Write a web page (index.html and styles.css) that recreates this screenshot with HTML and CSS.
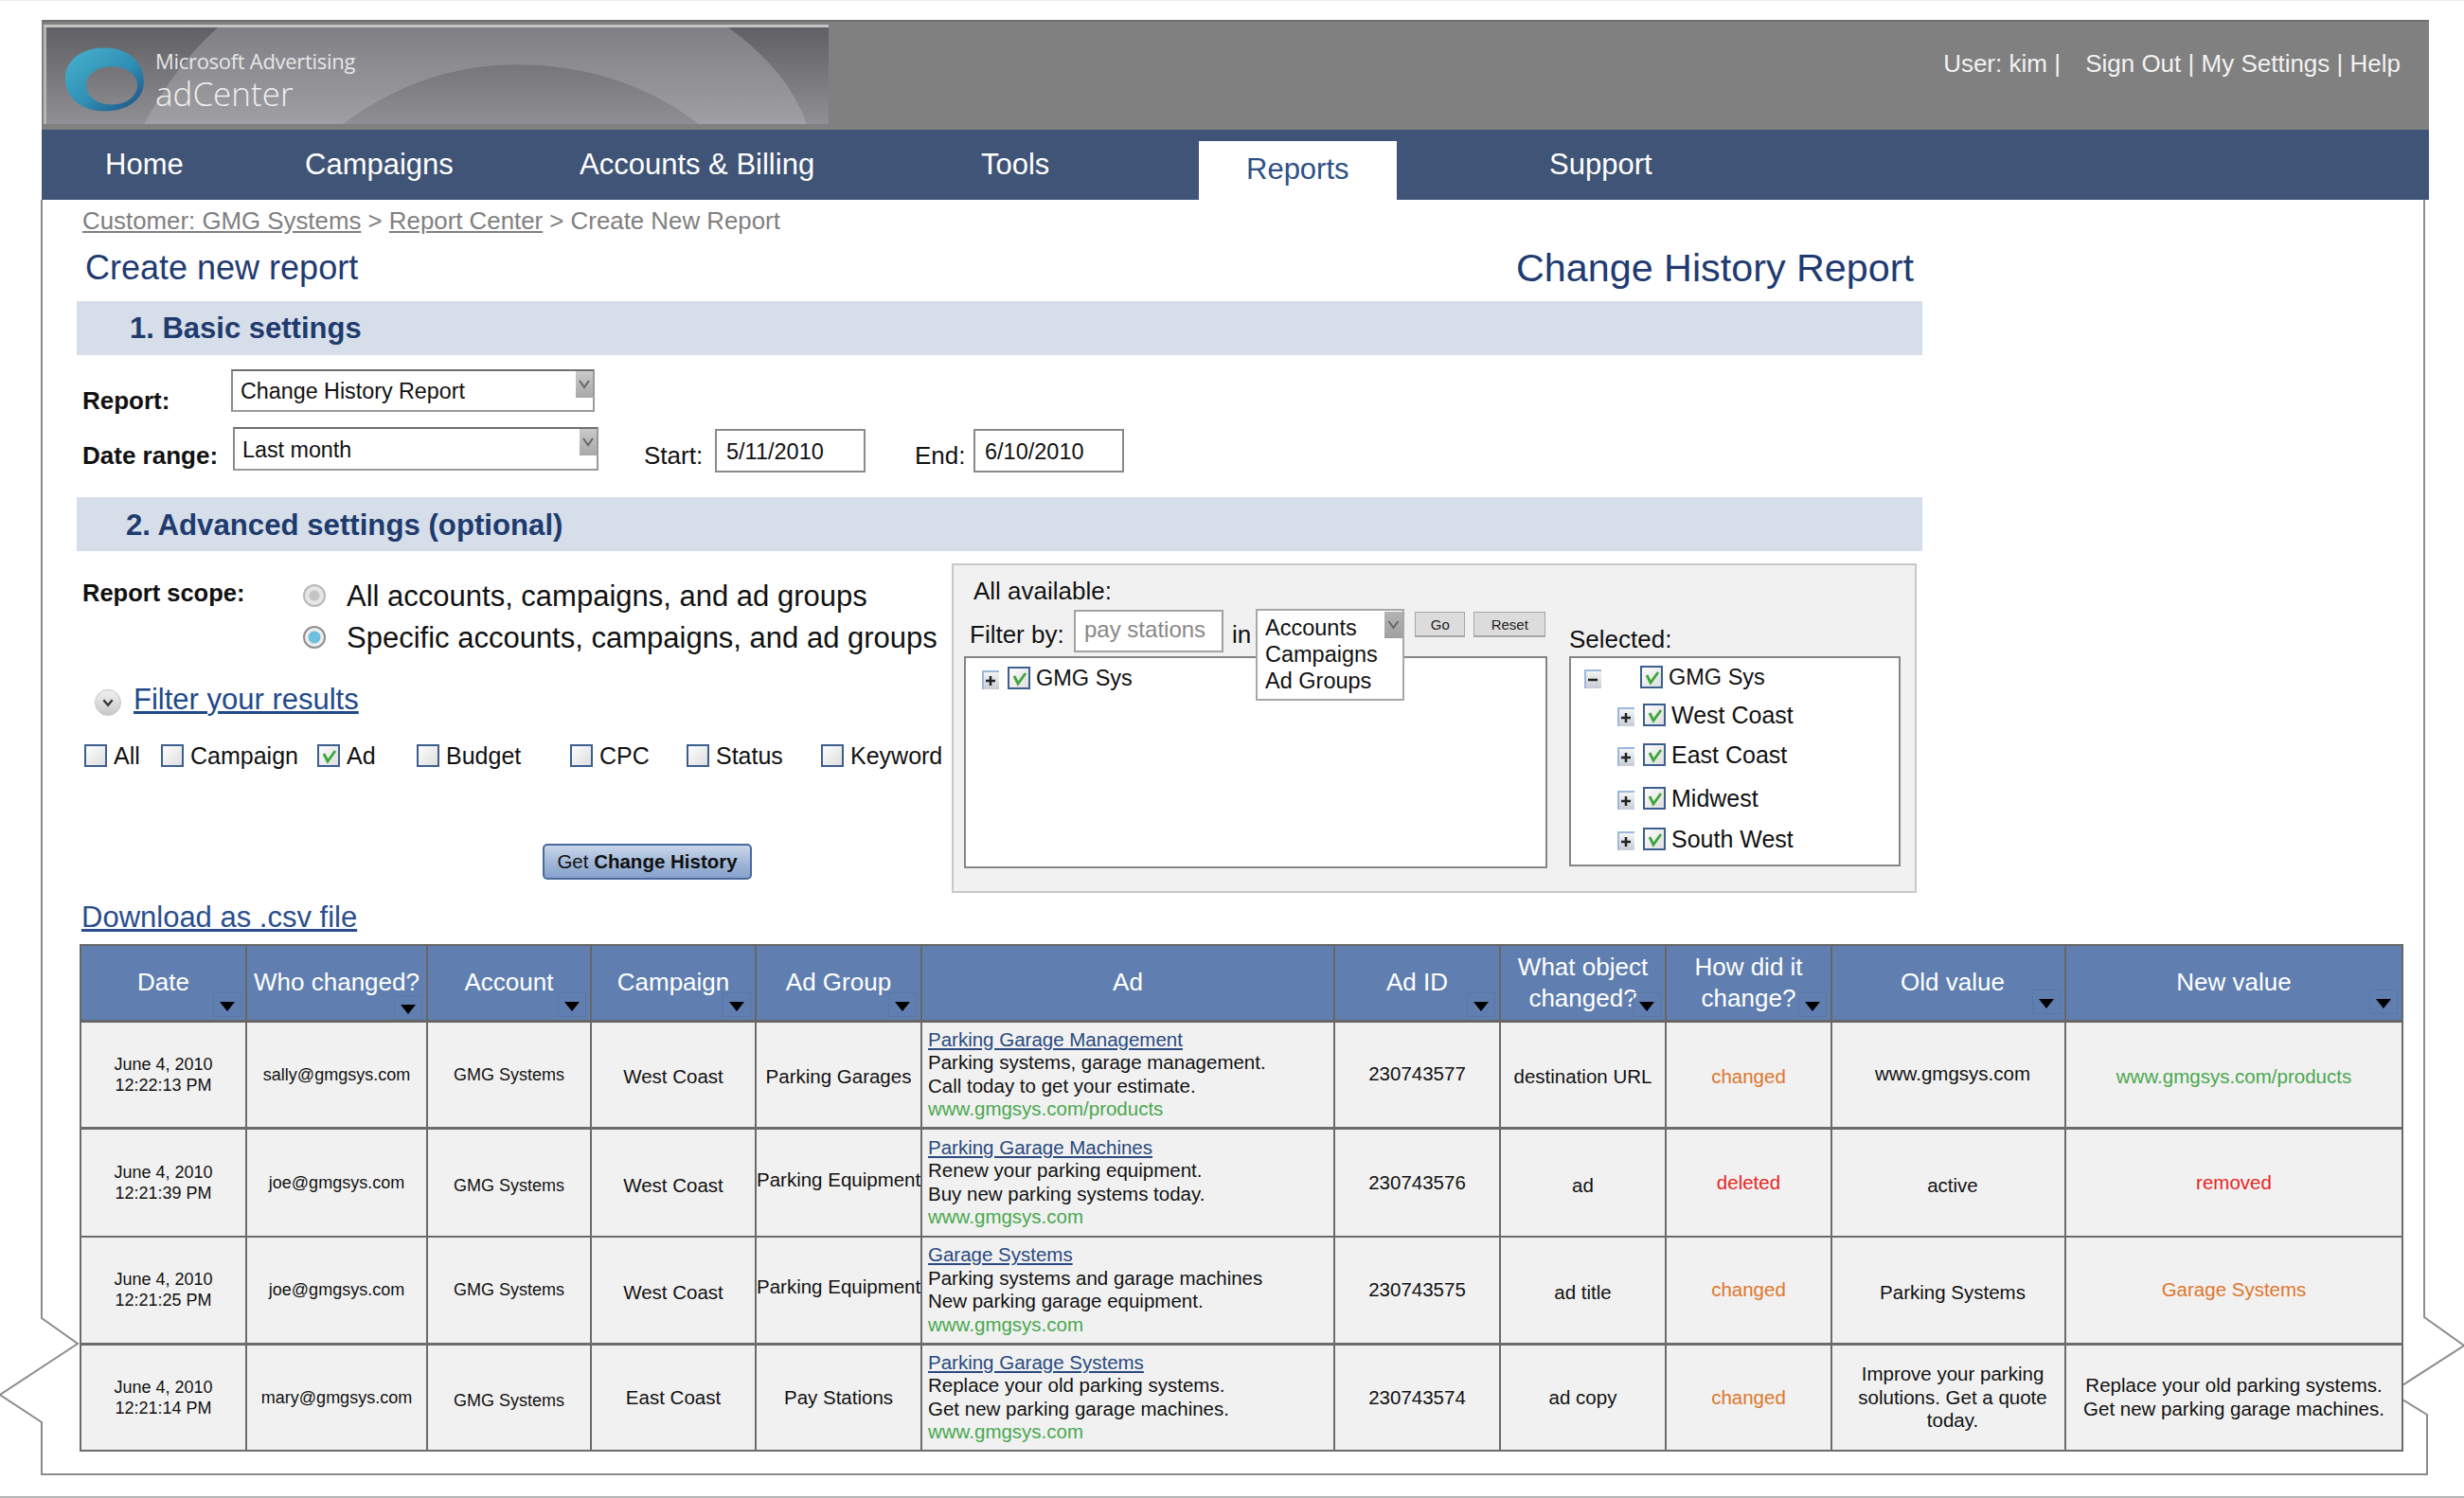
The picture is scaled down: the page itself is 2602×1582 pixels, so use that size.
FILE: index.html
```html
<!DOCTYPE html>
<html lang="en">

<head>
    <meta charset="UTF-8">
    <title>Change History Report</title>
    <link rel="stylesheet" href="styles.css">
</head>

<body>
    <svg class="frame" viewBox="0 0 2602 1582" width="2602" height="1582">
        <polyline points="2560,211 2560,1391 2602,1421 2537,1463"/>
        <polyline points="2537,1478 2563,1494 2563,1557 44,1557 44,1502 0,1473 82,1419 44,1392 44,211"/>
    </svg>

    <div class="page">
        <div class="header">
            <div class="logo">
                <svg class="logo-art" viewBox="0 0 829 104" width="829" height="102" preserveAspectRatio="none">
                    <defs>
                        <linearGradient id="logoBg" x1="0" y1="0" x2="0" y2="1">
                            <stop offset="0" stop-color="#606064"/>
                            <stop offset="1" stop-color="#909094"/>
                        </linearGradient>
                        <linearGradient id="logoLight" x1="0" y1="0" x2="0" y2="1">
                            <stop offset="0" stop-color="#808084"/>
                            <stop offset="1" stop-color="#a0a0a4"/>
                        </linearGradient>
                        <linearGradient id="logoDome" x1="0" y1="0" x2="0" y2="1">
                            <stop offset="0" stop-color="#77777b"/>
                            <stop offset="1" stop-color="#8f8f93"/>
                        </linearGradient>
                        <linearGradient id="ring" x1="0" y1="0" x2="1" y2="1">
                            <stop offset="0" stop-color="#49b3cf"/>
                            <stop offset="0.55" stop-color="#2f8fb4"/>
                            <stop offset="1" stop-color="#1f4d80"/>
                        </linearGradient>
                    </defs>
                    <rect width="829" height="104" fill="url(#logoBg)"/>
                    <path d="M184 0H723Q785 45 806 104H106Q140 40 184 0Z" fill="url(#logoLight)"/>
                    <path d="M316 104Q400 40 499 40Q610 40 692 104Z" fill="url(#logoDome)"/>
                    <rect width="3" height="104" fill="#b5b5b5"/>
                    <path fill-rule="evenodd" fill="url(#ring)" d="M64 22C90 22 106 38 106 58C106 78 88 90 64 90C40 90 23 76 23 54C23 36 40 22 64 22ZM72 42C56 42 45 51 45 62C45 74 56 83 72 83C88 83 99 74 99 62C99 51 88 42 72 42Z"/>
                </svg>
                <div class="logo-ms">Microsoft Advertising</div>
                <div class="logo-ad">adCenter</div>
            </div>
            <div class="user-links">
                <span class="user">User: kim |</span>
                <span>Sign Out | My Settings | Help</span>
            </div>
        </div>

        <div class="nav">
            <div>Home</div>
            <div>Campaigns</div>
            <div>Accounts &amp; Billing</div>
            <div>Tools</div>
            <div class="nav-active">Reports</div>
            <div class="nav-last">Support</div>
        </div>

        <div class="breadcrumb"><a>Customer: GMG Systems</a> &gt; <a>Report Center</a> &gt; Create New Report</div>

        <div class="titles">
            <h1>Create new report</h1>
            <h2>Change History Report</h2>
        </div>

        <div class="bar bar-one">1. Basic settings</div>

        <div class="basic-row row-report">
            <label class="field-label">Report:</label>
            <div class="select">Change History Report<span class="select-arrow"><svg viewBox="0 0 18 24"><path d="M4 8l5 7 5-7"/></svg></span></div>
        </div>
        <div class="basic-row row-range">
            <label class="field-label label-range">Date range:</label>
            <div class="select select-range">Last month<span class="select-arrow"><svg viewBox="0 0 18 24"><path d="M4 8l5 7 5-7"/></svg></span></div>
            <label class="date-label start-label">Start:</label>
            <div class="date-input start-input">5/11/2010</div>
            <label class="date-label end-label">End:</label>
            <div class="date-input end-input">6/10/2010</div>
        </div>

        <div class="bar bar-two">2. Advanced settings (optional)</div>

        <div class="advanced">
            <div class="adv-left">
                <div class="scope">
                    <div class="scope-label">Report scope:</div>
                    <div class="scope-options">
                        <div class="scope-option"><span class="radio"></span>All accounts, campaigns, and ad groups</div>
                        <div class="scope-option"><span class="radio radio-on"></span>Specific accounts, campaigns, and ad groups</div>
                    </div>
                </div>
                <div class="filter-toggle">
                    <span class="circle"><svg viewBox="0 0 28 28"><path d="M9 11l5 6 5-6"/></svg></span>
                    <a>Filter your results</a>
                </div>
                <div class="columns-list">
                    <div class="col-check"><span class="cb"></span>All</div>
                    <div class="col-check"><span class="cb"></span>Campaign</div>
                    <div class="col-check"><span class="cb"><svg viewBox="0 0 20 20"><path d="M5 8l4 8 8-11"/></svg></span>Ad</div>
                    <div class="col-check"><span class="cb"></span>Budget</div>
                    <div class="col-check"><span class="cb"></span>CPC</div>
                    <div class="col-check"><span class="cb"></span>Status</div>
                    <div class="col-check"><span class="cb"></span>Keyword</div>
                </div>
                <button class="get-btn">Get <b>Change History</b></button>
            </div>

            <div class="panel">
                <div class="panel-left">
                    <div class="panel-title">All available:</div>
                    <div class="filter-row">
                        <span class="filter-by">Filter by:</span>
                        <div class="filter-input">pay stations</div>
                        <span class="filter-in">in</span>
                        <div class="filter-popup">
                            <div>Accounts</div>
                            <div>Campaigns</div>
                            <div>Ad Groups</div>
                            <span class="popup-arrow"><svg viewBox="0 0 18 28"><path d="M4 10l5 7 5-7"/></svg></span>
                        </div>
                        <button class="small-btn btn-go">Go</button>
                        <button class="small-btn btn-reset">Reset</button>
                    </div>
                    <div class="tree tree-left">
                        <div class="tree-item">
                            <span class="exp"><svg viewBox="0 0 18 20"><path d="M4 11h10M9 6v10"/></svg></span>
                            <span class="cb"><svg viewBox="0 0 20 20"><path d="M5 8l4 8 8-11"/></svg></span>
                            GMG Sys
                        </div>
                    </div>
                </div>
                <div class="panel-right">
                    <div class="selected-title">Selected:</div>
                    <div class="tree tree-right">
                        <div class="tree-item item-root">
                            <span class="exp"><svg viewBox="0 0 18 20"><path d="M4 11h10"/></svg></span>
                            <span class="cb"><svg viewBox="0 0 20 20"><path d="M5 8l4 8 8-11"/></svg></span>
                            GMG Sys
                        </div>
                        <div class="tree-item item-west">
                            <span class="exp"><svg viewBox="0 0 18 20"><path d="M4 11h10M9 6v10"/></svg></span>
                            <span class="cb"><svg viewBox="0 0 20 20"><path d="M5 8l4 8 8-11"/></svg></span>
                            West Coast
                        </div>
                        <div class="tree-item item-east">
                            <span class="exp"><svg viewBox="0 0 18 20"><path d="M4 11h10M9 6v10"/></svg></span>
                            <span class="cb"><svg viewBox="0 0 20 20"><path d="M5 8l4 8 8-11"/></svg></span>
                            East Coast
                        </div>
                        <div class="tree-item item-mid">
                            <span class="exp"><svg viewBox="0 0 18 20"><path d="M4 11h10M9 6v10"/></svg></span>
                            <span class="cb"><svg viewBox="0 0 20 20"><path d="M5 8l4 8 8-11"/></svg></span>
                            Midwest
                        </div>
                        <div class="tree-item item-south">
                            <span class="exp"><svg viewBox="0 0 18 20"><path d="M4 11h10M9 6v10"/></svg></span>
                            <span class="cb"><svg viewBox="0 0 20 20"><path d="M5 8l4 8 8-11"/></svg></span>
                            South West
                        </div>
                    </div>
                </div>
            </div>
        </div>

        <a class="download">Download as .csv file</a>

        <table class="history">
            <colgroup>
                <col class="w-175"><col class="w-191"><col class="w-173"><col class="w-174"><col class="w-175"><col class="w-436"><col class="w-175"><col class="w-175"><col class="w-175"><col class="w-247"><col class="w-356">
            </colgroup>
            <thead>
                <tr>
                    <th>Date<span class="sort"></span></th>
                    <th>Who changed?<span class="sort sort-low"></span></th>
                    <th>Account<span class="sort"></span></th>
                    <th>Campaign<span class="sort"></span></th>
                    <th>Ad Group<span class="sort"></span></th>
                    <th>Ad</th>
                    <th>Ad ID<span class="sort"></span></th>
                    <th>What object<br>changed?<span class="sort"></span></th>
                    <th>How did it<br>change?<span class="sort"></span></th>
                    <th class="col-old">Old value<span class="sort sort-high"></span></th>
                    <th>New value<span class="sort sort-high"></span></th>
                </tr>
            </thead>
            <tbody>
                <tr class="row-a">
                    <td class="small">June 4, 2010<br>12:22:13 PM</td>
                    <td class="small">sally@gmgsys.com</td>
                    <td class="small">GMG Systems</td>
                    <td class="lo">West Coast</td>
                    <td class="lo">Parking Garages</td>
                    <td class="ad"><a>Parking Garage Management</a><br>Parking systems, garage management.<br>Call today to get your estimate.<br><span class="green">www.gmgsys.com/products</span></td>
                    <td>230743577</td>
                    <td class="lo">destination URL</td>
                    <td class="lo orange">changed</td>
                    <td class="col-old">www.gmgsys.com</td>
                    <td class="lo green">www.gmgsys.com/products</td>
                </tr>
                <tr class="row-b">
                    <td class="small">June 4, 2010<br>12:21:39 PM</td>
                    <td class="small">joe@gmgsys.com</td>
                    <td class="small lo">GMG Systems</td>
                    <td class="lo">West Coast</td>
                    <td class="hi">Parking Equipment</td>
                    <td class="ad"><a>Parking Garage Machines</a><br>Renew your parking equipment.<br>Buy new parking systems today.<br><span class="green">www.gmgsys.com</span></td>
                    <td>230743576</td>
                    <td class="lo">ad</td>
                    <td class="red">deleted</td>
                    <td class="lo col-old">active</td>
                    <td class="red">removed</td>
                </tr>
                <tr class="row-c">
                    <td class="small">June 4, 2010<br>12:21:25 PM</td>
                    <td class="small">joe@gmgsys.com</td>
                    <td class="small">GMG Systems</td>
                    <td class="lo">West Coast</td>
                    <td class="hi">Parking Equipment</td>
                    <td class="ad"><a>Garage Systems</a><br>Parking systems and garage machines<br>New parking garage equipment.<br><span class="green">www.gmgsys.com</span></td>
                    <td>230743575</td>
                    <td class="lo">ad title</td>
                    <td class="orange">changed</td>
                    <td class="lo col-old">Parking Systems</td>
                    <td class="orange">Garage Systems</td>
                </tr>
                <tr class="row-d">
                    <td class="small">June 4, 2010<br>12:21:14 PM</td>
                    <td class="small">mary@gmgsys.com</td>
                    <td class="small lo">GMG Systems</td>
                    <td>East Coast</td>
                    <td>Pay Stations</td>
                    <td class="ad"><a>Parking Garage Systems</a><br>Replace your old parking systems.<br>Get new parking garage machines.<br><span class="green">www.gmgsys.com</span></td>
                    <td>230743574</td>
                    <td>ad copy</td>
                    <td class="orange">changed</td>
                    <td class="col-old">Improve your parking<br>solutions. Get a quote<br>today.</td>
                    <td>Replace your old parking systems.<br>Get new parking garage machines.</td>
                </tr>
            </tbody>
        </table>
    </div>

    <div class="page-edge"></div>
</body>

</html>
```
FILE: styles.css
```css
html,
body {
    margin: 0;
    padding: 0;
}

body {
    position: relative;
    width: 2602px;
    height: 1582px;
    overflow: hidden;
    background-color: #fff;
    border-top: 1px solid #eeeeee;
    box-sizing: border-box;
    font-family: "Liberation Sans", Arial, sans-serif;
    font-size: 26px;
    color: #111;
}

/* Torn page outline behind everything */
.frame {
    position: absolute;
    top: -1px;
    left: 0;
    fill: none;
    stroke: #8c8c8c;
    stroke-width: 2px;
}

.page-edge {
    position: absolute;
    left: 0;
    right: 0;
    bottom: 0;
    height: 2px;
    background-color: #b4b4b4;
}

.page {
    position: relative;
    width: 2521px;
    margin-left: 44px;
    padding-top: 20px;
}

a {
    text-decoration: underline;
}

/* Header */
.header {
    display: flex;
    justify-content: space-between;
    height: 116px;
    box-sizing: border-box;
    padding: 7px 30px 0 2px;
    background-color: #808080;
    border-top: 2px solid #6e6e6e;
}

.logo {
    position: relative;
    width: 829px;
    height: 102px;
    border-top: 3px solid #c4c4c4;
    margin-top: -4px;
}

.logo-art {
    display: block;
}

.logo-ms {
    position: absolute;
    left: 118px;
    top: 20px;
    font-family: "Open Sans", sans-serif;
    font-size: 22px;
    line-height: 30px;
    letter-spacing: -0.3px;
    color: #e6e6e6;
}

.logo-ad {
    position: absolute;
    left: 118px;
    top: 47px;
    font-family: "Open Sans", sans-serif;
    font-weight: 300;
    font-size: 35px;
    line-height: 46px;
    color: #f0f0f0;
}

.user-links {
    padding-top: 22px;
    line-height: 30px;
    color: #f2f2f2;
}

.user {
    margin-right: 19px;
}

/* Main nav */
.nav {
    display: grid;
    grid-template-columns: 211px 290px 424px 230px 209px auto;
    height: 74px;
    padding-left: 67px;
    background-color: #3f5476;
    color: #fff;
    font-size: 31px;
    line-height: 74px;
}

.nav-active {
    margin-top: 12px;
    padding-left: 50px;
    height: 62px;
    line-height: 60px;
    background-color: #fff;
    color: #2f5187;
}

.nav-last {
    padding-left: 161px;
}

.breadcrumb {
    padding: 7px 0 0 43px;
    font-size: 25.85px;
    line-height: 30px;
    color: #808080;
}

.titles {
    display: flex;
    justify-content: space-between;
    align-items: center;
    width: 1931px;
    height: 52px;
    margin: 9px 0 9px 46px;
}

h1,
h2 {
    margin: 0;
    font-weight: normal;
    color: #1f3b72;
}

h1 {
    font-size: 36px;
}

h2 {
    font-size: 41.3px;
}

.bar {
    width: 1949px;
    height: 57px;
    margin-left: 37px;
    background-color: #d6deea;
    color: #1f3b6e;
    font-size: 31px;
    font-weight: bold;
    line-height: 57px;
}

.bar-one {
    box-sizing: border-box;
    padding-left: 56px;
}

.bar-two {
    box-sizing: border-box;
    padding-left: 52px;
    margin-top: 26px;
    font-size: 31.2px;
    line-height: 60px;
}

/* Basic settings */
.basic-row {
    display: flex;
    align-items: flex-start;
    margin-left: 43px;
    line-height: 30px;
}

.row-report {
    height: 45px;
    margin-top: 15px;
}

.row-range {
    margin-top: 16px;
}

.field-label {
    width: 157px;
    margin-top: 18px;
    font-weight: bold;
}

.label-range {
    width: 159px;
    margin-top: 15px;
}

.select {
    position: relative;
    box-sizing: border-box;
    width: 384px;
    height: 45px;
    padding-left: 8px;
    border: 2px solid #9a9a9a;
    border-top-color: #6f6f6f;
    border-left-color: #8a8a8a;
    background-color: #fff;
    font-size: 23.3px;
    line-height: 42px;
}

.select-range {
    width: 386px;
    height: 46px;
    line-height: 44px;
}

.select-arrow {
    position: absolute;
    top: 0;
    right: 0;
    width: 18px;
    height: 28px;
    background: linear-gradient(#c9c9c9, #a8a8a8);
}

.select-arrow svg,
.popup-arrow svg {
    display: block;
    width: 100%;
    height: 100%;
    fill: none;
    stroke: #666;
    stroke-width: 2px;
}

.date-label {
    margin-top: 15px;
}

.start-label {
    margin-left: 48px;
    width: 75px;
}

.end-label {
    margin-left: 52px;
    width: 62px;
}

.date-input {
    box-sizing: border-box;
    width: 159px;
    height: 46px;
    margin-top: 2px;
    padding-left: 10px;
    border: 2px solid #8a8a8a;
    background-color: #fff;
    font-size: 23.5px;
    line-height: 44px;
}

/* Advanced settings */
.advanced {
    display: flex;
    align-items: flex-start;
    margin-left: 43px;
}

.adv-left {
    width: 918px;
    padding-top: 26px;
}

.scope {
    display: flex;
}

.scope-label {
    width: 233px;
    padding-top: 3px;
    font-size: 25.5px;
    font-weight: bold;
    line-height: 30px;
}

.scope-option {
    display: flex;
    align-items: center;
    height: 44px;
    font-size: 31px;
    white-space: nowrap;
}

.radio {
    box-sizing: border-box;
    width: 24px;
    height: 24px;
    margin: -3px 22px 0 0;
    border: 2px solid #b8b8b8;
    border-radius: 50%;
    background: radial-gradient(circle, #c4c4c4 0 5px, #e6e6e6 6px);
}

.radio-on {
    border-color: #8f8f8f;
    background: radial-gradient(circle, #6fc0dc 0 6px, #eeeeee 7px);
}

.filter-toggle {
    display: flex;
    align-items: center;
    height: 40px;
    margin: 24px 0 0 13px;
    font-size: 31px;
    color: #1f4a8a;
}

.filter-toggle a {
    margin-top: -3px;
}

.circle {
    box-sizing: border-box;
    width: 28px;
    height: 28px;
    margin: 4px 13px 0 0;
    border: 1px solid #c4c4c4;
    border-radius: 50%;
    background: linear-gradient(#f0f0f0, #c8c8c8);
}

.circle svg {
    display: block;
    fill: none;
    stroke: #333;
    stroke-width: 2.5px;
}

.columns-list {
    display: grid;
    grid-template-columns: 81px 165px 105px 162px 123px 142px auto;
    height: 36px;
    margin: 20px 0 0 2px;
    font-size: 25px;
    white-space: nowrap;
}

.col-check {
    display: flex;
    align-items: center;
}

.cb {
    flex: none;
    display: block;
    box-sizing: border-box;
    width: 24px;
    height: 24px;
    margin-right: 7px;
    border: 2px solid #3d5f90;
    background: linear-gradient(135deg, #fdfdfd, #dedede);
}

.cb svg {
    display: block;
    fill: none;
    stroke: #3fa53c;
    stroke-width: 2.8px;
}

.get-btn {
    display: block;
    width: 221px;
    height: 38px;
    margin: 75px 0 0 486px;
    padding: 0;
    border: 2px solid #4a6a9e;
    border-radius: 5px;
    background: linear-gradient(#c9d6ea, #9db4d6 60%, #86a2cc);
    color: #111;
    font-family: inherit;
    font-size: 20.5px;
}

/* Filter panel */
.panel {
    display: flex;
    box-sizing: border-box;
    width: 1019px;
    height: 348px;
    margin-top: 13px;
    border: 2px solid #c8c8c8;
    background-color: #f1f1f1;
}

.panel-left {
    width: 639px;
    padding-left: 11px;
}

.panel-title {
    margin: 12px 0 0 10px;
    line-height: 30px;
}

.filter-row {
    position: relative;
    display: flex;
    align-items: flex-start;
    height: 54px;
    margin-left: 6px;
}

.filter-by {
    width: 110px;
    margin-top: 16px;
    line-height: 30px;
}

.filter-input {
    box-sizing: border-box;
    width: 158px;
    height: 45px;
    margin-top: 5px;
    padding-left: 9px;
    border: 2px solid #a2a2a2;
    background-color: #fff;
    color: #888;
    font-size: 24px;
    line-height: 38px;
}

.filter-in {
    margin: 16px 0 0 9px;
    line-height: 30px;
}

/* Open dropdown lies over the tree box */
.filter-popup {
    position: absolute;
    left: 302px;
    top: 4px;
    z-index: 2;
    box-sizing: border-box;
    width: 157px;
    height: 97px;
    padding: 4px 0 0 8px;
    border: 2px solid #a8a8a8;
    background-color: #fff;
    font-size: 23.5px;
    line-height: 28px;
}

.popup-arrow {
    position: absolute;
    top: 1px;
    right: 0;
    width: 19px;
    height: 28px;
    background: linear-gradient(#b4b4b4, #a0a0a0);
}

.small-btn {
    height: 27px;
    padding: 0;
    border: 1px solid #a6a6a6;
    border-bottom-width: 2px;
    background-color: #dcdcdc;
    color: #222;
    font-family: inherit;
    font-size: 15px;
}

.btn-go {
    width: 53px;
    margin: 7px 0 0 173px;
}

.btn-reset {
    width: 76px;
    margin: 7px 0 0 9px;
}

.tree {
    box-sizing: border-box;
    border: 2px solid #858585;
    background-color: #fff;
    font-size: 25px;
}

.tree-left {
    position: relative;
    width: 616px;
    height: 224px;
    padding: 9px 0 0 17px;
    font-size: 23.5px;
}

.tree-item {
    display: flex;
    align-items: center;
    height: 24px;
}

.tree-item .cb {
    margin-right: 6px;
}

.exp {
    flex: none;
    width: 18px;
    height: 20px;
    margin: 4px 9px 0 0;
    border-top: 2px solid #9cb8de;
    border-left: 2px solid #9cb8de;
    box-sizing: border-box;
    background: linear-gradient(#f4f4f4, #c8ccd4);
}

.exp svg {
    display: block;
    margin: -2px 0 0 -2px;
    fill: none;
    stroke: #222;
    stroke-width: 2.5px;
}

.panel-right {
    width: 350px;
}

.selected-title {
    margin-top: 63px;
    line-height: 30px;
}

.tree-right {
    height: 222px;
    margin-top: 3px;
}

.item-root {
    margin: 8px 0 0 14px;
    font-size: 23.5px;
}

.item-root .exp {
    margin-right: 41px;
}

.item-west,
.item-east,
.item-mid,
.item-south {
    margin-left: 49px;
}

.item-west {
    margin-top: 16px;
}

.item-east {
    margin-top: 18px;
}

.item-mid {
    margin-top: 22px;
}

.item-south {
    margin-top: 19px;
}

.download {
    display: block;
    margin: 8px 0 0 42px;
    color: #2a4e8c;
    font-size: 31px;
    line-height: 36px;
}

/* Results table */
.history {
    width: 2452px;
    margin: 10px 0 0 40px;
    border-collapse: collapse;
    table-layout: fixed;
    font-size: 20.5px;
    text-align: center;
}

.w-175 { width: 175px; }
.w-191 { width: 191px; }
.w-173 { width: 173px; }
.w-174 { width: 174px; }
.w-436 { width: 436px; }
.w-247 { width: 247px; }
.w-356 { width: 356px; }

.history th,
.history td {
    box-sizing: border-box;
}

.history th {
    position: relative;
    height: 80px;
    padding: 0;
    border: 2px solid #666;
    border-bottom-width: 3px;
    background-color: #607fb0;
    color: #fff;
    font-size: 26px;
    font-weight: normal;
    line-height: 33px;
    white-space: nowrap;
}

.sort {
    position: absolute;
    right: 4px;
    bottom: 3px;
    display: flex;
    justify-content: center;
    align-items: center;
    box-sizing: border-box;
    width: 30px;
    height: 26px;
    border: 1px solid #5a77a4;
}

.sort::after {
    content: "";
    margin-top: 4px;
    border-top: 10px solid #000;
    border-left: 8px solid transparent;
    border-right: 8px solid transparent;
}

.sort-low {
    bottom: 0;
}

.sort-high {
    bottom: 6px;
}

.history td {
    padding: 0;
    border: 2px solid #6b6b6b;
    background-color: #f1f1f1;
    line-height: 24.5px;
    white-space: nowrap;
}

.row-a td { height: 113px; }
.row-b td { height: 115px; }
.row-c td { height: 113px; }
.row-d td { height: 113px; }

.row-b td,
.row-d td {
    border-top-width: 3px;
}

.history td.small {
    font-size: 18px;
    line-height: 22px;
}

.history td.lo {
    padding-top: 6px;
}

.history td.hi {
    padding-bottom: 6px;
}

.history td.ad {
    padding-left: 6px;
    text-align: left;
}

.history td.ad a {
    color: #2a4a80;
}

.history .col-old {
    padding-left: 9px;
}

.green {
    color: #4aa84f;
}

.orange {
    color: #e0762b;
}

.red {
    color: #e8251f;
}
```
